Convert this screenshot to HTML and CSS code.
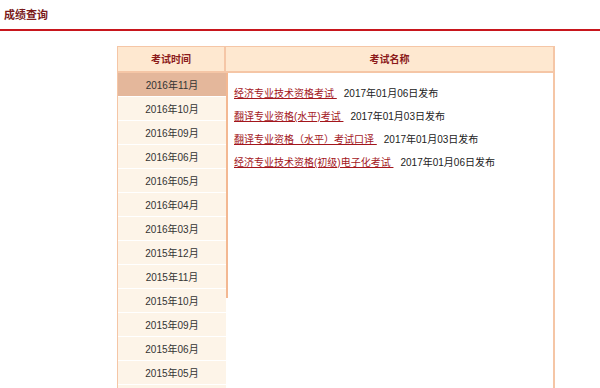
FILE: index.html
```html
<!DOCTYPE html>
<html lang="zh-CN">
  <head>
    <meta charset="UTF-8" />
    <title>成绩查询</title>
    <link rel="stylesheet" href="styles.css">
  </head>
  <body>
    <div class="page-title">
      <h2>成绩查询</h2>
    </div>

    <div class="score-table">
      <div class="table-head">
        <div class="head-time">考试时间</div>
        <div class="head-name">考试名称</div>
      </div>

      <div class="table-body">
        <ul class="month-list">
          <li class="active">2016年11月</li>
          <li>2016年10月</li>
          <li>2016年09月</li>
          <li>2016年06月</li>
          <li>2016年05月</li>
          <li>2016年04月</li>
          <li>2016年03月</li>
          <li>2015年12月</li>
          <li>2015年11月</li>
          <li>2015年10月</li>
          <li>2015年09月</li>
          <li>2015年06月</li>
          <li>2015年05月</li>
          <li></li>
        </ul>

        <div class="exam-list">
          <p><a href="#">经济专业技术资格考试&nbsp;</a><span>2017年01月06日发布</span></p>
          <p><a href="#">翻译专业资格(水平)考试&nbsp;</a><span>2017年01月03日发布</span></p>
          <p><a href="#">翻译专业资格（水平）考试口译&nbsp;</a><span>2017年01月03日发布</span></p>
          <p><a href="#">经济专业技术资格(初级)电子化考试&nbsp;</a><span>2017年01月06日发布</span></p>
        </div>
      </div>
    </div>
  </body>
</html>
```

FILE: styles.css
```css
* {
  margin: 0;
  padding: 0;
  box-sizing: border-box;
}

body {
  font-family: "Liberation Sans", "Noto Sans CJK SC", sans-serif;
  font-size: 10px;
  color: #222;
  background: #fff;
  overflow: hidden;
}

.page-title {
  height: 31px;
  padding: 8px 4px 0;
  border-bottom: 2px solid #c8161d;
}

.page-title h2 {
  font-size: 11px;
  line-height: 15px;
  color: #7a1a1a;
  font-weight: bold;
}

.score-table {
  width: 438px;
  margin: 15px 0 0 117px;
  border-left: 1px solid #f5c6a6;
  border-right: 2px solid #f5c6a6;
}

.table-head {
  display: flex;
  height: 27px;
  background: #fee8d0;
  border-top: 1px solid #f5c6a6;
  border-bottom: 2px solid #f5c6a6;
}

.head-time,
.head-name {
  text-align: center;
  line-height: 25px;
  font-weight: bold;
  color: #8b1a1a;
  font-size: 10px;
}

.head-time {
  width: 108px;
  border-right: 2px solid #f5c6a6;
}

.head-name {
  flex: 1;
}

.table-body {
  display: flex;
}

.month-list {
  list-style: none;
  width: 108px;
}

.month-list li {
  height: 24px;
  line-height: 25px;
  text-align: center;
  background: #fdf4e8;
  border-bottom: 1px solid #fff;
  color: #333;
  font-size: 10px;
}

.month-list li.active {
  background: #e4b79b;
}

.exam-list {
  flex: 1;
  height: 225px;
  padding: 9px 0 0 6px;
  border-left: 2px solid #f3b892;
}

.exam-list p {
  line-height: 23px;
  font-size: 10px;
}

.exam-list a {
  color: #a3161c;
  text-decoration: underline;
}

.exam-list span {
  margin-left: 7px;
  color: #222;
}
```
